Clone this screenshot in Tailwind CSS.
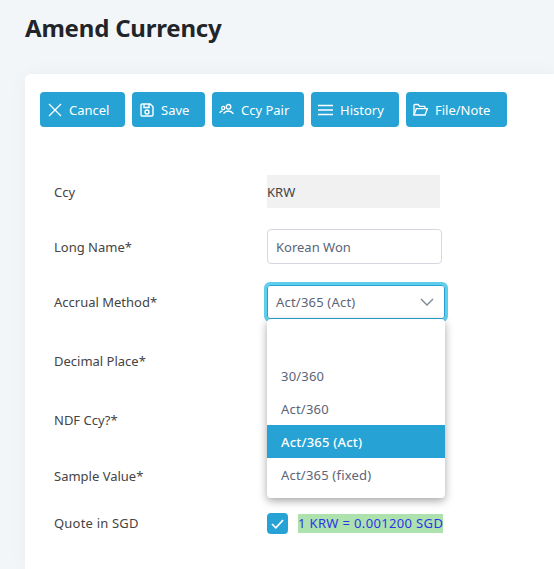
<!DOCTYPE html>
<html lang="en">
<head>
  <meta charset="UTF-8" />
  <title>Amend Currency</title>
  <script src="https://cdn.jsdelivr.net/npm/@tailwindcss/browser@4"></script>
</head>
<body class="h-[569px] overflow-hidden bg-[#f3f6f9] font-['Noto_Sans',sans-serif] text-[13px] text-[#444]">
  <div class="pl-[25px]">
    <h1 class="h-[74px] pt-[10px] text-[24px] leading-[36px] font-bold tracking-[-0.2px] text-[#212529]">Amend Currency</h1>

    <div class="h-[495px] rounded-tl-[6px] bg-white pt-[18px] pl-[15px] shadow-[0_0_20px_rgba(0,0,0,0.04)]">
      <!-- toolbar -->
      <div class="flex gap-[7px] text-[13px] text-white">
        <button class="flex h-[35px] w-[85px] items-center rounded-[4px] bg-[#26a3d4] pl-[8px]">
          <svg class="mr-[7px] h-[14px] w-[14px]" viewBox="0 0 14 14" fill="none" stroke="currentColor" stroke-width="1.3"><path d="M1 1l12 12M13 1L1 13"/></svg><span class="pt-[2px]">Cancel</span>
        </button>
        <button class="flex h-[35px] w-[73px] items-center rounded-[4px] bg-[#26a3d4] pl-[8px]">
          <svg class="mr-[7px] h-[14px] w-[14px]" viewBox="0 0 14 14" fill="none" stroke="currentColor" stroke-width="1.4"><path d="M1 2.2C1 1.500 1.500 1 2.200 1h8L13 3.800v8c0 .7-.5 1.200-1.200 1.200H2.200C1.500 13 1 12.500 1 11.800z"/><path d="M4 1v3.500h5V1"/><circle cx="7" cy="9" r="2"/></svg><span class="pt-[2px]">Save</span>
        </button>
        <button class="flex h-[35px] w-[92px] items-center rounded-[4px] bg-[#26a3d4] pl-[7px]">
          <svg class="mr-[7px] h-[14px] w-[15px]" viewBox="0 0 15 14" fill="none" stroke="currentColor" stroke-width="1.3"><circle cx="9.500" cy="3.800" r="2.300"/><circle cx="4.200" cy="5" r="1.600"/><path d="M4.500 10.500c1.500-2 3-2.500 5-2.500s3.500.8 5 2.800M.7 10c.3-1.300 1.300-2 2.800-2"/></svg><span class="pt-[2px]">Ccy Pair</span>
        </button>
        <button class="flex h-[35px] w-[88px] items-center rounded-[4px] bg-[#26a3d4] pl-[7px]">
          <svg class="mr-[7px] h-[14px] w-[15px]" viewBox="0 0 15 14" fill="none" stroke="currentColor" stroke-width="1.7"><path d="M0 2.500h15M0 7h15M0 11.500h15"/></svg><span class="pt-[2px]">History</span>
        </button>
        <button class="flex h-[35px] w-[101px] items-center rounded-[4px] bg-[#26a3d4] pl-[7px]">
          <svg class="mr-[7px] h-[14px] w-[15px]" viewBox="0 0 15 14" fill="none" stroke="currentColor" stroke-width="1.300"><path d="M1 12V2.200C1 1.800 1.300 1.500 1.700 1.500h3.500l1.500 1.800h4.600c.4 0 .7.300.7.700v1.600"/><path d="M1 12l2.300-6.300h11L12 12z"/></svg><span class="pt-[2px]">File/Note</span>
        </button>
      </div>

      <!-- form -->
      <div class="relative mt-[48px] grid grid-cols-[213px_1fr] items-center pl-[14px]">
        <label class="h-[33px] leading-[35px]">Ccy</label>
        <div class="h-[33px] w-[173px] bg-[#f1f1f1] leading-[35px]">KRW</div>

        <label class="mt-[21px] h-[35px] leading-[37px]">Long Name*</label>
        <input class="mt-[21px] h-[35px] w-[175px] rounded-[4px] border border-[#d5d8e0] px-[8px] text-[#5c6478]" value="Korean Won" />

        <label class="mt-[21px] h-[34px] leading-[34px]">Accrual Method*</label>
        <div class="relative mt-[21px] flex h-[34px] w-[178px] items-center justify-between rounded-[3px] border border-[#26a3d4] pr-[10px] pl-[8px] text-[#5c6478] shadow-[0_0_0_3px_#5fcdec]">
          <span class="pt-[2px] tracking-[0.2px]">Act/365 (Act)</span>
          <svg class="h-[8px] w-[14px] text-[#7d8798]" viewBox="0 0 14 8" fill="none" stroke="currentColor" stroke-width="1.400"><path d="M1 1l6 6 6-6"/></svg>
          <!-- open dropdown -->
          <ul class="absolute top-[33px] left-[-1px] z-10 w-[178px] rounded-[4px] bg-white tracking-[0.2px] shadow-[0_3px_8px_rgba(0,0,0,0.35)]">
            <li class="h-[33px]"></li>
            <li class="mt-[7px] h-[33px] px-[14px] leading-[35px]">30/360</li>
            <li class="h-[33px] px-[14px] leading-[35px]">Act/360</li>
            <li class="h-[33px] bg-[#26a3d4] px-[14px] leading-[35px] font-medium text-white">Act/365 (Act)</li>
            <li class="h-[33px] px-[14px] leading-[35px]">Act/365 (fixed)</li>
            <li class="h-[7px]"></li>
          </ul>
        </div>

        <label class="mt-[25px] h-[34px] leading-[34px]">Decimal Place*</label>
        <div class="mt-[25px] h-[34px]"></div>

        <label class="mt-[25px] h-[34px] leading-[34px]">NDF Ccy?*</label>
        <div class="mt-[25px] h-[34px]"></div>

        <label class="mt-[22px] h-[34px] leading-[34px]">Sample Value*</label>
        <div class="mt-[22px] h-[34px]"></div>

        <label class="mt-[20px] h-[21px] leading-[21px] tracking-[0.2px]">Quote in SGD</label>
        <div class="mt-[20px] flex h-[21px] items-center">
          <span class="flex h-[21px] w-[21px] items-center justify-center rounded-[4px] bg-[#26a3d4]">
            <svg class="h-[10px] w-[13px]" viewBox="0 0 13 10" fill="none" stroke="white" stroke-width="1.700"><path d="M1 5l3.800 3.800L12 1.200"/></svg>
          </span>
          <span class="ml-[10px] bg-[#ade1ad] leading-[19px] tracking-[0.35px] text-[#2b35e8]">1 KRW = 0.001200 SGD</span>
        </div>
      </div>
    </div>
  </div>
</body>
</html>
